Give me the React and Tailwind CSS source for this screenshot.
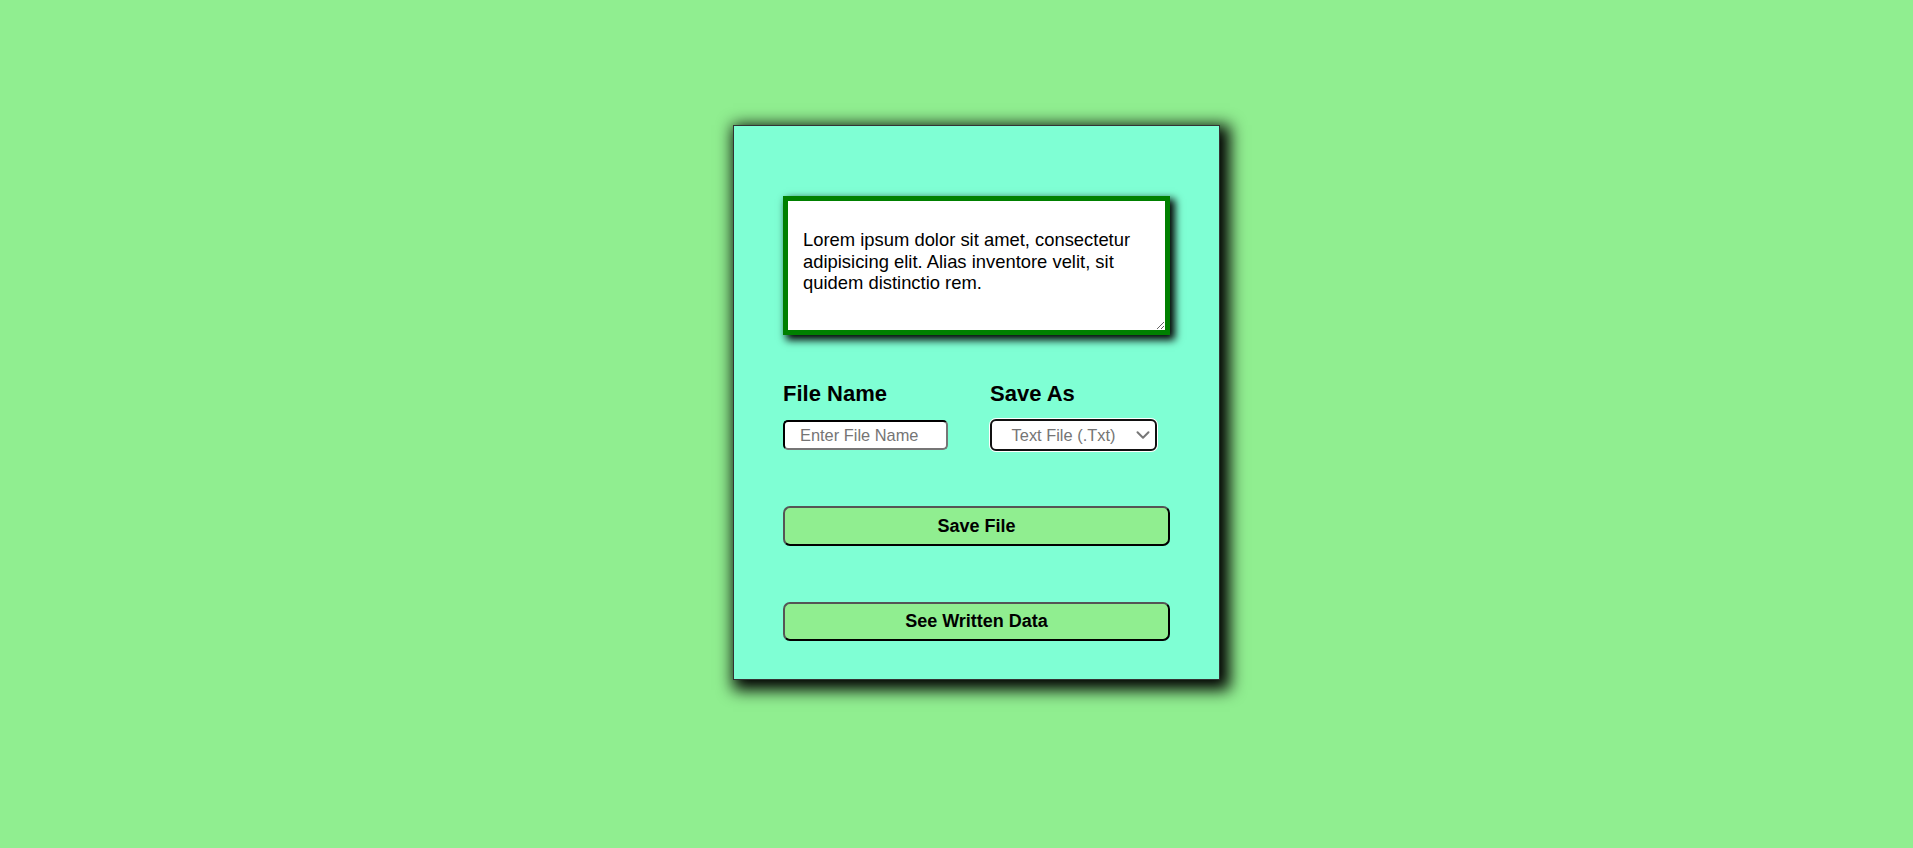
import { ChevronDown } from 'lucide-react';

const sans = "font-['Liberation_Sans',Arial,sans-serif]";

export default function App() {
  return (
    <div className={`min-h-screen w-full bg-[#90ee90] flex justify-center items-start pl-[40px] pt-[125px] ${sans}`}>
      {/* Card */}
      <div className="w-[487px] h-[555px] bg-[#7fffd4] border border-[#333] shadow-[5px_5px_15px_5px_#000] px-[49px] pt-[70px] flex flex-col">
        {/* Text area */}
        <textarea
          defaultValue="Lorem ipsum dolor sit amet, consectetur adipisicing elit. Alias inventore velit, sit quidem distinctio rem."
          className="w-[387px] h-[139px] shrink-0 bg-white border-[5px] border-[#008000] shadow-[4px_4px_8px_1px_#000] pt-[28px] px-[15px] text-[18.4px] leading-[21.7px] text-black outline-none"
        />

        {/* File name / save as */}
        <div className="flex mt-[46px]">
          <div className="w-[207px] flex flex-col">
            <label className="text-[22px] font-bold text-black leading-[25px]">File Name</label>
            <input
              type="text"
              placeholder="Enter File Name"
              className="mt-[14px] w-[165px] h-[30px] bg-white rounded-[5px] border-2 [border-style:inset] border-[#767676] border-t-[#222] border-l-[#222] px-[15px] text-[16.4px] placeholder:text-[#757575] outline-none"
            />
          </div>
          <div className="flex flex-col">
            <label className="text-[22px] font-bold text-black leading-[25px]">Save As</label>
            <div className="relative mt-[13px] w-[167px] h-[32px]">
              <select className="appearance-none w-full h-full bg-white rounded-[6px] border-2 border-[#111] shadow-[0_0_0_1px_#fff] text-center text-[16.4px] text-[#757575] pr-[20px] outline-none">
                <option>Text File (.Txt)</option>
              </select>
              <ChevronDown size={22} strokeWidth={2.2} className="absolute right-[3px] top-[5px] text-[#777] pointer-events-none" />
            </div>
          </div>
        </div>

        {/* Buttons */}
        <button className="mt-[55px] w-[387px] h-[40px] bg-[#90ee90] rounded-[7px] border-2 border-[#555] border-b-black border-r-black text-[18px] font-bold text-black">
          Save File
        </button>
        <button className="mt-[56px] w-[387px] h-[39px] bg-[#90ee90] rounded-[7px] border-2 border-[#555] border-b-black border-r-black text-[18px] font-bold text-black">
          See Written Data
        </button>
      </div>
    </div>
  );
}
